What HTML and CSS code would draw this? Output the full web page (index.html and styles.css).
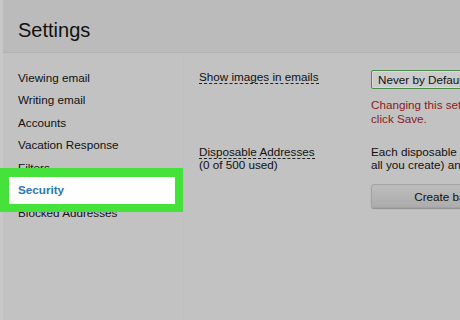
FILE: index.html
```html
<!DOCTYPE html>
<html lang="en">
<head>
    <meta charset="UTF-8">
    <title>Settings</title>
    <link rel="stylesheet" href="styles.css">
</head>
<body>
    <div class="app">
        <div class="topbar">
            <h1>Settings</h1>
        </div>

        <div class="main">
            <ul class="sidebar">
                <li>Viewing email</li>
                <li>Writing email</li>
                <li>Accounts</li>
                <li>Vacation Response</li>
                <li>Filters</li>
                <li class="active"><span class="highlight"></span><span class="label">Security</span></li>
                <li>Blocked Addresses</li>
            </ul>

            <div class="content">
                <div class="row">
                    <div class="name"><span class="dashed">Show images in emails</span></div>
                    <div class="value">
                        <div class="select">Never by Default</div>
                        <p class="warning">Changing this setting will reload the page after you<br>click Save.</p>
                    </div>
                </div>

                <div class="row second">
                    <div class="name"><span class="dashed">Disposable Addresses</span><br>(0 of 500 used)</div>
                    <div class="value">
                        <p class="note">Each disposable address (there's a limit of 500 for<br>all you create) and its settings are listed below.</p>
                        <button class="button">Create basic disposable address</button>
                    </div>
                </div>
            </div>
        </div>
    </div>
</body>
</html>
```

FILE: styles.css
```css
body {
    margin: 0;
    background: #c2c2c2;
    color: #111;
    font-family: "Liberation Sans", Arial, sans-serif;
    overflow: hidden;
}

.app {
    width: 460px;
    height: 320px;
    display: flex;
    flex-direction: column;
    background: #c2c2c2;
    border-left: 3px solid #c8c8c8;
    box-sizing: border-box;
}

.topbar {
    height: 52px;
    background: #bbbbbb;
    border-bottom: 1px solid #b2b2b2;
    padding-left: 15px;
    display: flex;
    align-items: flex-end;
}

.topbar h1 {
    margin: 0 0 10px;
    font-size: 20px;
    font-weight: normal;
    line-height: 24px;
}

.main {
    display: flex;
    flex: 1;
}

.sidebar {
    list-style: none;
    margin: 0;
    padding: 13.5px 0 0;
    width: 180px;
    flex-shrink: 0;
    border-right: 1px solid #bfbfbf;
}

.sidebar li {
    padding-left: 15px;
    font-size: 11.7px;
    line-height: 22.6px;
}

.sidebar li.active {
    position: relative;
    z-index: 1;
}

.sidebar .highlight {
    position: absolute;
    left: -3px;
    top: -11px;
    width: 166px;
    height: 27px;
    background: #fff;
    border: solid #44e23a;
    border-width: 9px 8px 8px 9px;
}

.sidebar .label {
    position: relative;
    color: #2b76b3;
    font-weight: bold;
}

.content {
    padding: 17px 0 0 15px;
    font-size: 11.7px;
}

.row {
    display: flex;
}

.row.second {
    margin-top: 19px;
}

.name {
    width: 172px;
    flex-shrink: 0;
    line-height: 14px;
}

.second .name,
.note {
    line-height: 13px;
}

.dashed {
    border-bottom: 1px dashed #222;
}

.value {
    white-space: nowrap;
}

.select {
    width: 110px;
    height: 17px;
    line-height: 17px;
    padding-left: 6px;
    border: 1px solid #4b8b4b;
    border-radius: 2px;
    background: #cbcbcb;
    box-shadow: inset 0 0 0 1px #dadada;
}

.warning {
    margin: 9px 0 0;
    line-height: 14px;
    color: #8c1b1b;
}

.note {
    margin: 0;
}

.button {
    margin-top: 13px;
    width: 256px;
    height: 24px;
    font-family: inherit;
    font-size: 11.7px;
    color: #111;
    background: linear-gradient(#bdbdbd, #acacac);
    border: 1px solid #a2a2a2;
    border-radius: 3px;
    box-shadow: 0 1px 1px #8e8e8e;
}
```
